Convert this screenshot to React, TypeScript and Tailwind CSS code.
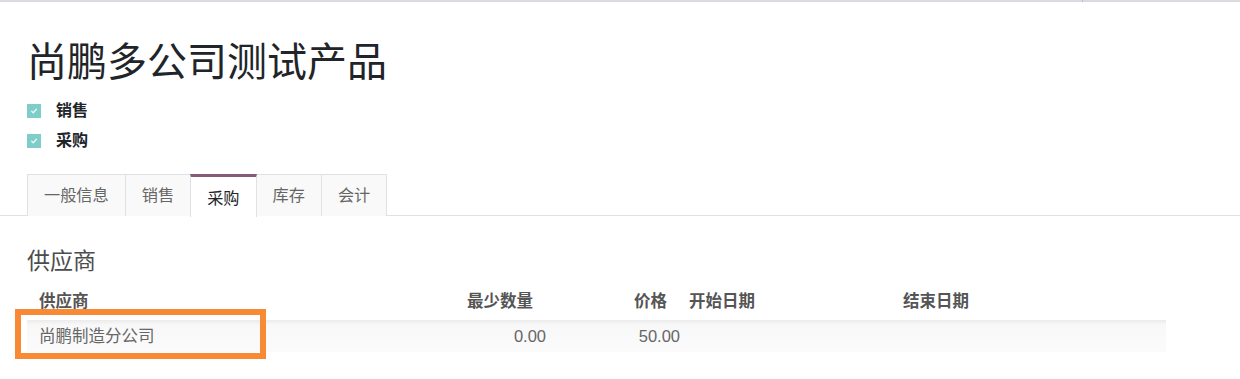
import React from 'react';

const font = "font-['Liberation_Sans','Noto_Sans_CJK_SC',sans-serif]";

const tabs = ['一般信息', '销售', '采购', '库存', '会计'];
const activeTab = '采购';

function CheckRow({ label }: { label: string }) {
  return (
    <div className="flex items-center h-[30px]">
      <span className="w-[14px] h-[14px] bg-[#7fcdc8] flex items-center justify-center">
        <svg viewBox="0 0 10 10" className="w-[8px] h-[8px]" fill="none" stroke="#eefaf9" strokeWidth={1.6}>
          <path d="M2 5.2l2 2 4-4.4" strokeLinecap="round" strokeLinejoin="round" />
        </svg>
      </span>
      <span className="ml-[15px] text-[16px] font-bold text-[#212529]">{label}</span>
    </div>
  );
}

export default function App() {
  return (
    <div className={`${font} bg-white w-[1240px] h-[379px] overflow-hidden`}>
      <div className="h-[2px] bg-[#d8dce1] flex">
        <span className="ml-[1082px] w-px h-[2px] bg-[#b9bec4]" />
      </div>

      <div className="pl-[27px] pt-[36px]">
        <h1 className="text-[40px] leading-[48px] font-normal text-[#212529]">尚鹏多公司测试产品</h1>
        <div className="mt-[10px]">
          <CheckRow label="销售" />
          <CheckRow label="采购" />
        </div>
      </div>

      <div className="mt-[18px] border-b border-[#dee2e6] pl-[27px] flex h-[42px]">
        {tabs.map((t, i) => {
          const active = t === activeTab;
          return (
            <div
              key={t}
              className={`px-4 h-[42px] flex items-center text-[16.2px] border-x border-t ${i > 0 ? '-ml-px' : ''} ${
                active
                  ? 'bg-white border-[#dee2e6] border-t-[3px] border-t-[#875a7b] text-[#212529] pt-[2px] relative z-10 h-[43px]'
                  : 'bg-[#f9f9f9] border-[#dee2e6] text-[#666666]'
              }`}
            >
              {t}
            </div>
          );
        })}
      </div>

      <div className="pl-[27px]">
        <h2 className="mt-[29px] text-[23px] leading-[32px] font-normal text-[#4c4c4c]">供应商</h2>

        <div className="mt-[9px] w-[1139px]">
          <div className="grid grid-cols-[393px_130px_134px_214px_268px] h-[30px] items-center text-[16.5px] font-bold text-[#555555]">
            <div className="pl-[12px]">供应商</div>
            <div className="text-right pr-[17px]">最少数量</div>
            <div className="text-right pr-[17px]">价格</div>
            <div className="pl-[5px]">开始日期</div>
            <div className="pl-[5px]">结束日期</div>
          </div>

          <div className="relative mt-[4px] grid grid-cols-[393px_130px_134px_214px_268px] h-[32px] items-center text-[16.5px] text-[#666666] bg-linear-to-b from-[#ebebeb] via-[#f8f8f8] via-[15%] to-[#fbfbfb]">
            <div className="pl-[12px]">尚鹏制造分公司</div>
            <div className="text-right pr-[4px]">0.00</div>
            <div className="text-right pr-[4px]">50.00</div>
            <div />
            <div />
            <span className="absolute left-[-12px] top-[-11px] w-[251px] h-[50px] border-[6px] border-[#f88a36] pointer-events-none" />
          </div>
        </div>
      </div>
    </div>
  );
}
